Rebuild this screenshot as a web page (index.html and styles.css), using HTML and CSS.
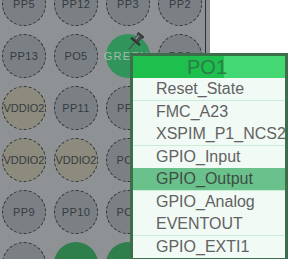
FILE: index.html
```html
<!DOCTYPE html>
<html lang="en">
<head>
    <meta charset="UTF-8">
    <meta name="viewport" content="width=device-width, initial-scale=1.0">
    <title>Pin menu</title>
    <link rel="stylesheet" href="styles.css">
</head>
<body>

    <div class="board">
        <div class="panel">
            <div class="pins">
                <div class="pin">PP5</div>
                <div class="pin">PP12</div>
                <div class="pin">PP3</div>
                <div class="pin">PP2</div>

                <div class="pin">PP13</div>
                <div class="pin">PO5</div>
                <div class="pin green bright"><span class="glabel">GREEN...</span></div>
                <div class="pin">PO2</div>

                <div class="pin power">VDDIO2</div>
                <div class="pin">PP11</div>
                <div class="pin">PP4</div>
                <div class="pin"></div>

                <div class="pin power">VDDIO2</div>
                <div class="pin power">VDDIO2</div>
                <div class="pin">PO4</div>
                <div class="pin"></div>

                <div class="pin">PP9</div>
                <div class="pin">PP10</div>
                <div class="pin">PO6</div>
                <div class="pin"></div>

                <div class="pin"></div>
                <div class="pin green"></div>
                <div class="pin green"></div>
                <div class="pin"></div>
            </div>
        </div>

        <svg class="pushpin" width="18" height="22" viewBox="0 0 18 22">
            <g transform="rotate(40 9 11)">
                <rect x="5" y="1" width="8" height="3" rx="1" fill="#383b3e"/>
                <rect x="6" y="3" width="6" height="6" fill="#45484b"/>
                <rect x="7" y="3.5" width="1.5" height="5" fill="#8a8d90"/>
                <rect x="3" y="9" width="12" height="2.5" rx="1" fill="#323538"/>
                <rect x="8.4" y="11.5" width="1.3" height="9" fill="#4a4d50"/>
            </g>
        </svg>

        <div class="menu">
            <div class="menu-head"><span>PO1</span></div>
            <div class="item">Reset_State</div>
            <div class="item">FMC_A23</div>
            <div class="item">XSPIM_P1_NCS2</div>
            <div class="item">GPIO_Input</div>
            <div class="item active">GPIO_Output</div>
            <div class="item">GPIO_Analog</div>
            <div class="item">EVENTOUT</div>
            <div class="item">GPIO_EXTI1</div>
        </div>
    </div>

</body>
</html>
```

FILE: styles.css
```css
body {
    margin: 0;
    background-color: #fff;
    font-family: "Liberation Sans", Arial, sans-serif;
}
.board {
    position: relative;
    width: 297px;
    height: 259px;
    overflow: hidden;
}
.panel {
    width: 210px;
    height: 100%;
    overflow: hidden;
    background: linear-gradient(to right, #8f9294 205px, #2e3134 205px, #2e3134 206px, #8f9294 206px);
}
.pins {
    display: grid;
    grid-template-columns: repeat(4, 44px);
    grid-auto-rows: 44px;
    gap: 8px;
    padding-left: 2px;
    margin-top: -18px;
}
.pin {
    box-sizing: border-box;
    border: 1px dashed #2c3034;
    border-radius: 50%;
    background-color: #7b8085;
    color: #363b40;
    font-size: 11px;
    letter-spacing: 0.4px;
    display: flex;
    align-items: center;
    justify-content: center;
    white-space: nowrap;
}
.pin.power { background-color: #8c8b7e; letter-spacing: 0; }
.pin.green { background-color: #2f7f4d; border-color: #2f7f4d; }
.pin.green.bright { background-color: #31945a; border-color: #31945a; }
.glabel {
    color: #a8b9ad;
    letter-spacing: 1.3px;
    margin-left: 10px;
}
.pushpin {
    position: absolute;
    left: 126px;
    top: 31px;
}
.menu {
    position: absolute;
    left: 130px;
    top: 53px;
    width: 152px;
    border: 3px solid #3c6e4c;
    background-color: #f1faf5;
}
.menu-head {
    height: 22px;
    background: linear-gradient(to right, #1fbf4e 91px, #43d874 91px);
    color: #2d7c48;
    font-size: 20px;
    line-height: 22px;
    text-align: center;
}
.menu-head span { margin-left: -4px; }
.item {
    height: 22px;
    line-height: 22px;
    padding-left: 23px;
    font-size: 16px;
    color: #626262;
    white-space: nowrap;
    overflow: hidden;
}
.item:nth-child(even) { border-bottom: 1px solid #c9eed7; }
.item.active { background-color: #6ac18c; color: #3f4d43; }
```
